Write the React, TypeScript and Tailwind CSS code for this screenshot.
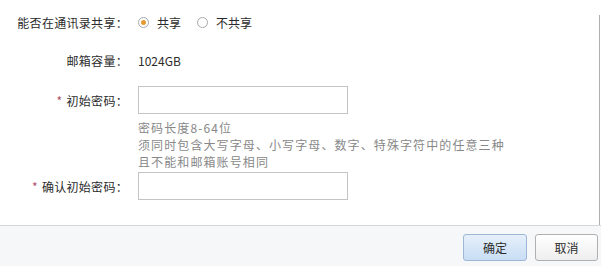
import React from 'react';

const font = { fontFamily: '"Noto Sans CJK SC", "Liberation Sans", sans-serif' };

function Label({ required, children }: { required?: boolean; children: React.ReactNode }) {
  return (
    <div className="w-[128px] shrink-0 text-right text-[#2b2b2b] whitespace-nowrap tracking-[0.3px]">
      {required && <span className="text-[#b0506a] mr-[4px]">*</span>}
      {children}
    </div>
  );
}

function Radio({ checked, label }: { checked?: boolean; label: string }) {
  return (
    <label className="flex items-center gap-[8px] text-[#2b2b2b]">
      <span className="w-[11px] h-[11px] rounded-full border border-[#a8a8a8] bg-white flex items-center justify-center">
        {checked && <span className="w-[5px] h-[5px] rounded-full bg-[#e59a2f]" />}
      </span>
      {label}
    </label>
  );
}

export default function App() {
  return (
    <div className="relative w-[601px] h-[266px] bg-white text-[12px] leading-[17px]" style={font}>
      <div className="absolute right-[1px] top-[15px] h-[210px] w-px bg-[#b0b0b0]" />

      <div className="flex flex-col pt-[14px] h-[225px]">
        <div className="flex items-center h-[17px]">
          <Label>能否在通讯录共享：</Label>
          <div className="flex items-center gap-[16px] ml-[10px]">
            <Radio checked label="共享" />
            <Radio label="不共享" />
          </div>
        </div>

        <div className="flex items-center h-[17px] mt-[21px]">
          <Label>邮箱容量：</Label>
          <div className="ml-[10px] text-[#2b2b2b]">1024GB</div>
        </div>

        <div className="flex items-center h-[28px] mt-[17px]">
          <Label required>初始密码：</Label>
          <input className="ml-[10px] w-[210px] h-[28px] border border-[#c4c4c4] bg-white outline-none" />
        </div>

        <div className="ml-[138px] mt-[5px] flex flex-col text-[12px] tracking-[1.1px] text-[#888]">
          <div className="h-[17px] leading-[17px]">密码长度8-64位</div>
          <div className="h-[17px] leading-[17px]">须同时包含大写字母、小写字母、数字、特殊字符中的任意三种</div>
          <div className="h-[17px] leading-[17px]">且不能和邮箱账号相同</div>
        </div>

        <div className="flex items-center h-[28px] mt-[2px]">
          <Label required>确认初始密码：</Label>
          <input className="ml-[10px] w-[210px] h-[28px] border border-[#c4c4c4] bg-white outline-none" />
        </div>
      </div>

      <div className="h-[41px] border-t border-[#d6d6d6] bg-[#f6f7f9] flex justify-end items-start pt-[8px] pr-[3px] gap-[8px]">
        <button className="w-[64px] h-[27px] rounded-[3px] border border-[#9db7d6] bg-gradient-to-b from-[#e6f0fb] to-[#c8ddf4] text-[#2b2b2b]">
          确定
        </button>
        <button className="w-[63px] h-[27px] rounded-[3px] border border-[#b0b0b0] bg-gradient-to-b from-white to-[#eeeeee] text-[#2b2b2b]">
          取消
        </button>
      </div>
    </div>
  );
}
